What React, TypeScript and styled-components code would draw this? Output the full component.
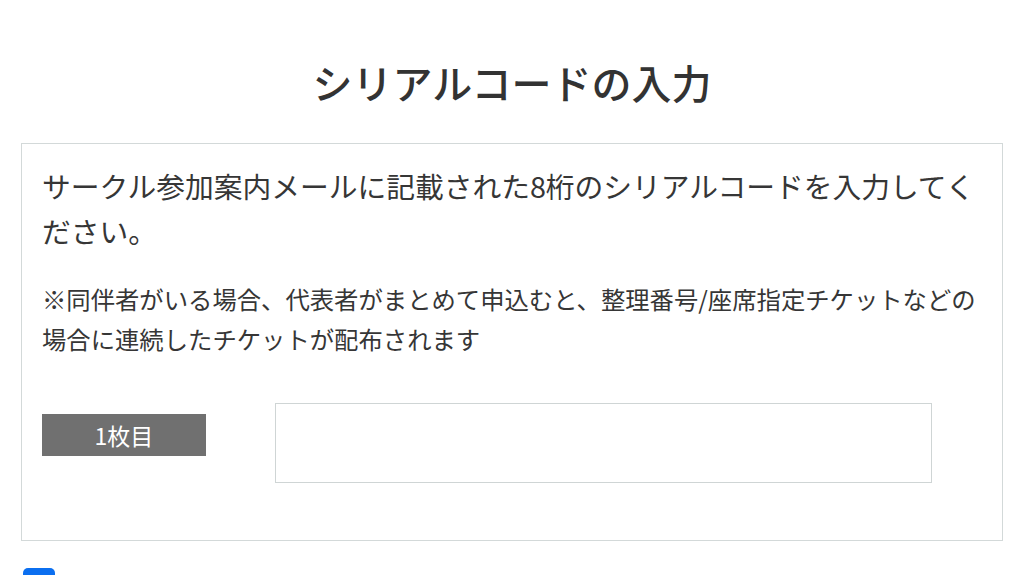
import React from 'react';
import styled, { createGlobalStyle } from 'styled-components';

const GlobalStyle = createGlobalStyle`
  html, body {
    margin: 0;
    padding: 0;
    background: #ffffff;
    overflow: hidden;
  }
  body {
    font-family: "Noto Sans CJK JP", "Noto Sans", sans-serif;
    color: #333333;
  }
`;

const Page = styled.div`
  width: 1024px;
  height: 575px;
  overflow: hidden;
  display: flex;
  flex-direction: column;
`;

const Title = styled.h1`
  margin: 52px 0 0;
  height: 60px;
  line-height: 60px;
  font-size: 40px;
  font-weight: 500;
  text-align: center;
  color: #333333;
`;

const Card = styled.section`
  margin: 31px 21px 0;
  border: 1px solid #d3d9d9;
  padding: 19px 20px 57px;
  display: flex;
  flex-direction: column;
`;

const Lead = styled.p`
  margin: 0;
  font-size: 28.75px;
  line-height: 45px;
  color: #363636;
`;

const Note = styled.p`
  margin: 26px 0 0;
  font-size: 24.35px;
  line-height: 39.5px;
  color: #363636;
`;

const Row = styled.div`
  margin-top: 45px;
  display: flex;
  align-items: flex-start;
  gap: 69px;
`;

const Label = styled.div`
  margin-top: 11px;
  width: 164px;
  height: 42px;
  background: #707070;
  color: #ffffff;
  font-size: 23px;
  line-height: 42px;
  text-align: center;
`;

const CodeInput = styled.input`
  box-sizing: border-box;
  width: 657px;
  height: 80px;
  margin: 0;
  border: 1px solid #cfd5d5;
  background: #ffffff;
  font-family: inherit;
  font-size: 24px;
  padding: 0 16px;
  outline: none;
`;

const Agree = styled.div`
  margin: 27px 0 0 23px;
  width: 32px;
  height: 32px;
  border-radius: 5px;
  background: #0b6ff0;
  flex-shrink: 0;
`;

export default function App() {
  return (
    <Page>
      <GlobalStyle />
      <Title>シリアルコードの入力</Title>
      <Card>
        <Lead>サークル参加案内メールに記載された8桁のシリアルコードを入力してください。</Lead>
        <Note>※同伴者がいる場合、代表者がまとめて申込むと、整理番号/座席指定チケットなどの場合に連続したチケットが配布されます</Note>
        <Row>
          <Label>1枚目</Label>
          <CodeInput type="text" aria-label="1枚目" />
        </Row>
      </Card>
      <Agree />
    </Page>
  );
}
